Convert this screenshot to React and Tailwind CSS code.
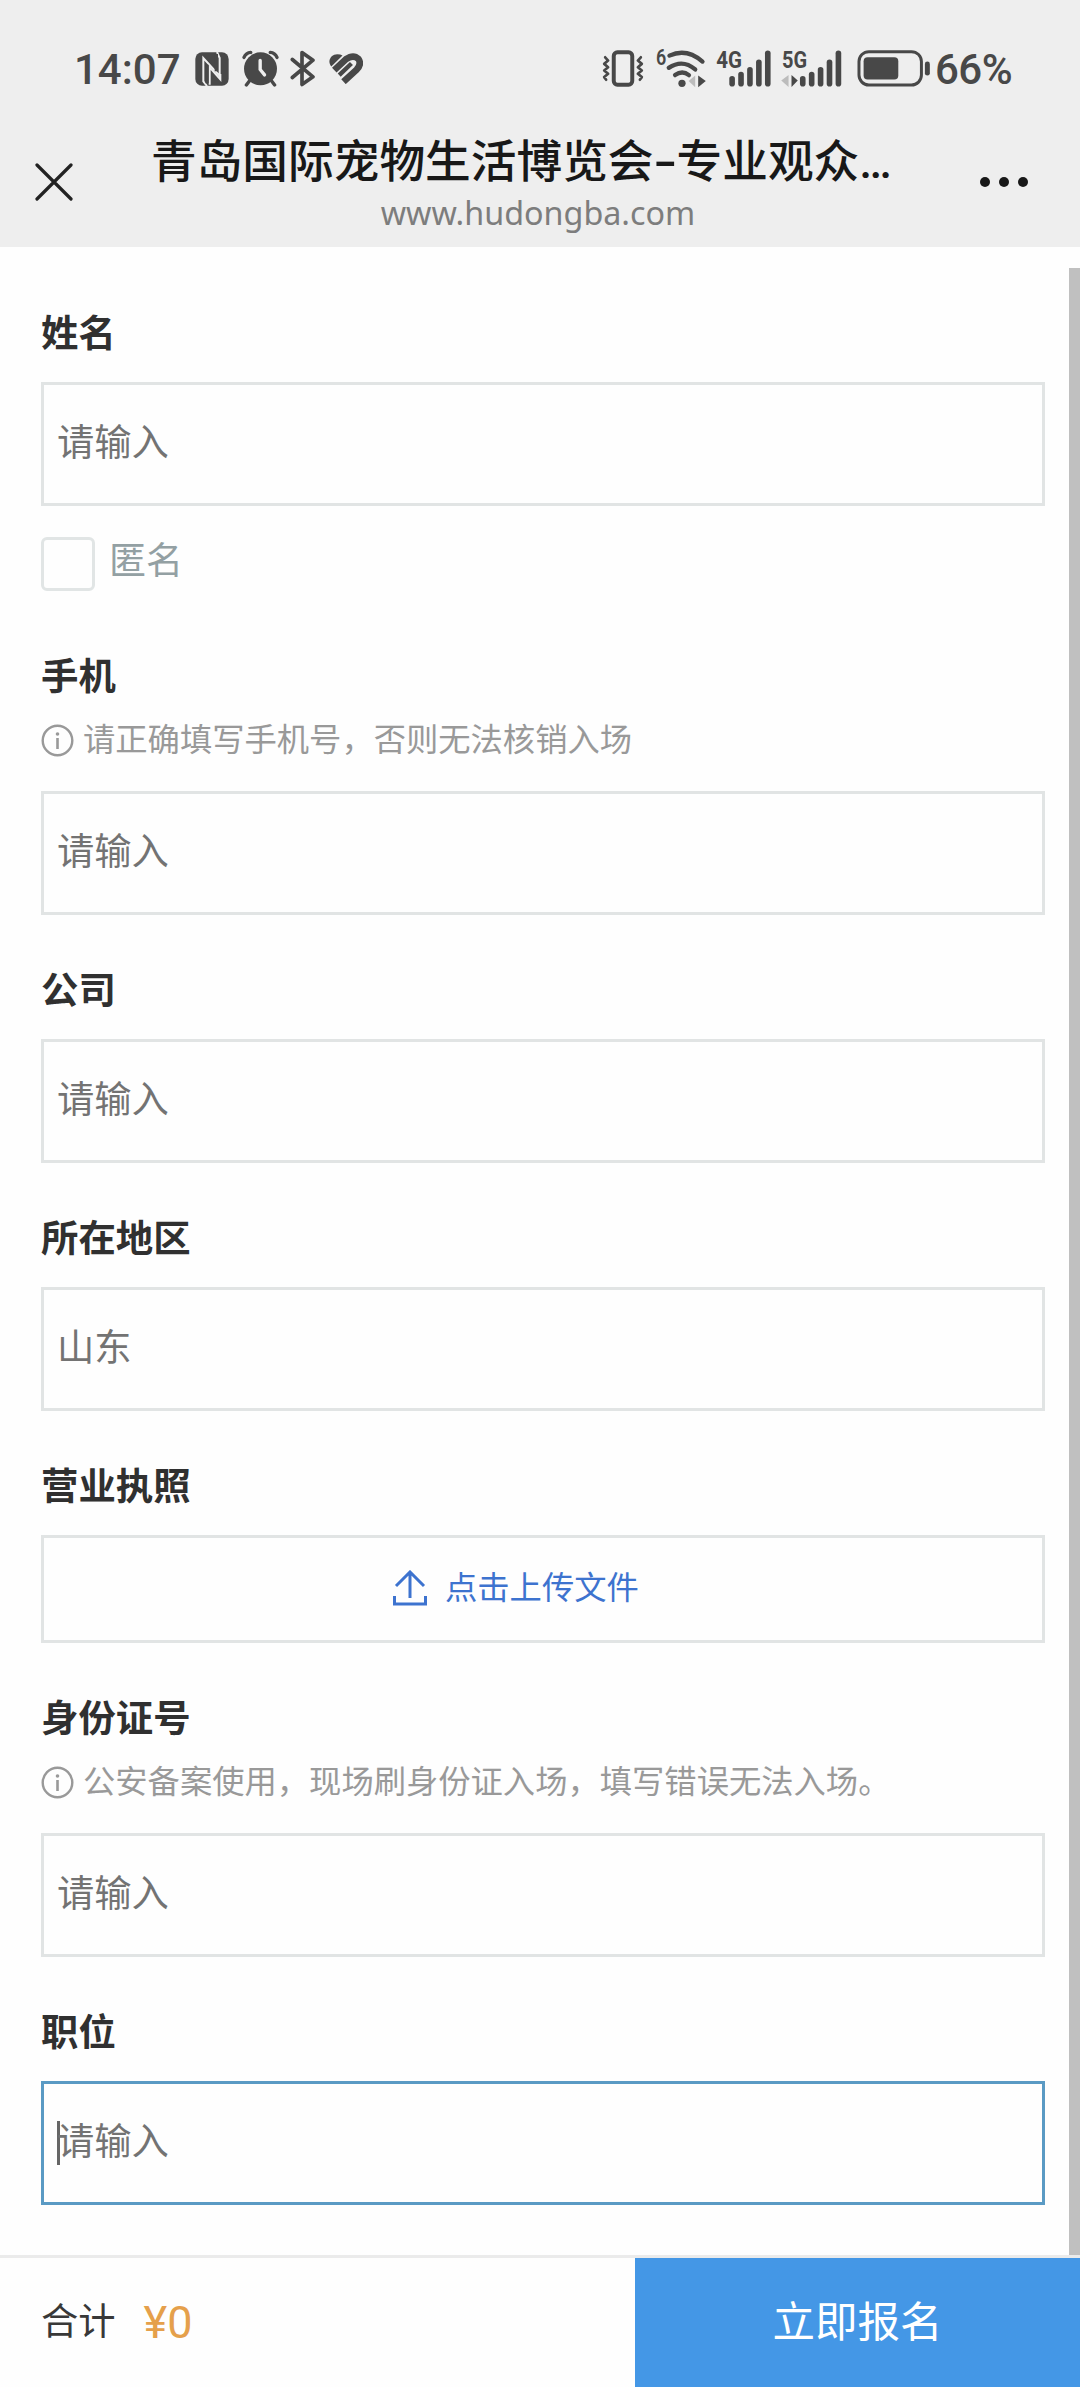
import React from "react";

const fields = [
  { label: "姓名", text: "请输入", anonymous: true },
  { label: "手机", hint: "请正确填写手机号，否则无法核销入场", text: "请输入" },
  { label: "公司", text: "请输入" },
  { label: "所在地区", text: "山东" },
  { label: "营业执照", upload: true },
  {
    label: "身份证号",
    hint: "公安备案使用，现场刷身份证入场，填写错误无法入场。",
    text: "请输入",
  },
  { label: "职位", text: "请输入", focused: true },
];

const NfcIcon = () => (
  <svg viewBox="0 0 102 102" className="w-[34px] h-[34px] ml-[14px]">
    <rect x="1" y="1" width="100" height="100" rx="20" fill="#484848" />
    <path d="M36 102 L25 88 V18 L74 72 V18 L66 0" fill="none" stroke="#eee" strokeWidth="6" />
    <path d="M44 98 V46 L76 82 V66" fill="none" stroke="#eee" strokeWidth="6" />
    <path d="M36 38 V94 M64 6 V58" stroke="#484848" strokeWidth="10" />
  </svg>
);

const AlarmIcon = () => (
  <svg viewBox="0 0 110 110" className="w-[37px] h-[37px] ml-[13px]">
    <g fill="none" stroke="#484848" strokeWidth="10" strokeLinecap="round">
      <path d="M6 22 Q12 8 26 7 M104 22 Q98 8 84 7" />
      <path d="M22 92 L13 104 M88 92 L97 104" />
    </g>
    <circle cx="55" cy="56" r="49" fill="#484848" />
    <path d="M54 31 V58 L67 74" fill="none" stroke="#eee" strokeWidth="10" strokeLinecap="round" />
  </svg>
);

const BluetoothIcon = () => (
  <svg viewBox="0 0 78 110" className="w-[26px] h-[37px] ml-[11px]">
    <path
      d="M7 28 L69 80 L36 103 V7 L69 30 L7 82"
      fill="none"
      stroke="#484848"
      strokeWidth="11"
      strokeLinecap="round"
      strokeLinejoin="round"
    />
  </svg>
);

const HealthIcon = () => (
  <svg viewBox="0 0 106 92" className="w-[35px] h-[31px] ml-[12px]">
    <path d="M10 40 C-4 22 10 3 28 3 Q38 3 44 7 Z" fill="#484848" />
    <g fill="none" stroke="#484848" strokeLinecap="butt">
      <path d="M19 51 L54 18 Q77 2 92 17 Q103 33 86 50 L47 86" strokeWidth="20" />
      <path d="M34 66 L71 31" strokeWidth="13" />
    </g>
  </svg>
);

const VibrateIcon = () => (
  <svg viewBox="0 0 126 112" className="w-[42px] h-[37px]">
    <g fill="none" stroke="#484848" strokeLinejoin="round" strokeLinecap="round">
      <rect x="35" y="7" width="56" height="98" rx="11" strokeWidth="12" />
      <path d="M9 22 L18 32 L6 42 L18 52 L6 62 L18 72 L6 82 L12 90" strokeWidth="8" />
      <path d="M117 22 L108 32 L120 42 L108 52 L120 62 L108 72 L120 82 L114 90" strokeWidth="8" />
    </g>
  </svg>
);

const WifiIcon = () => (
  <svg viewBox="0 0 150 118" className="w-[50px] h-[39px] ml-[12px] overflow-visible">
    <text x="-1" y="48" fontSize="67" fontWeight="600" fill="#484848" textLength="31" lengthAdjust="spacingAndGlyphs">6</text>
    <g fill="none" stroke="#484848" strokeWidth="13" strokeLinecap="round">
      <path d="M40 20 Q92 -4 140 38" />
      <path d="M38 57 Q80 29 118 62" />
      <path d="M57 79 Q79 63 99 79" />
    </g>
    <circle cx="78" cy="104" r="11" fill="#484848" />
    <path d="M118 80 V116 L98 97 Z" fill="#bcbcbc" />
    <path d="M127 80 V116 L150 97 Z" fill="#484848" />
  </svg>
);

const Bars = () => (
  <g stroke="#484848" strokeWidth="17" strokeLinecap="round">
    <path d="M8 87 V102" />
    <path d="M35 74 V102" />
    <path d="M62 60 V102" />
    <path d="M89 37 V102" />
    <path d="M116 10 V102" />
  </g>
);

const Signal4G = () => (
  <svg viewBox="0 0 168 112" className="w-[56px] h-[37px] ml-[10px] overflow-visible">
    <text x="0" y="55" fontSize="73" fontWeight="700" fill="#484848" textLength="78" lengthAdjust="spacingAndGlyphs">4G</text>
    <g transform="translate(40 0)">
      <Bars />
    </g>
  </svg>
);

const Signal5G = () => (
  <svg viewBox="0 0 186 112" className="w-[62px] h-[37px] ml-[9px] overflow-visible">
    <text x="2" y="55" fontSize="73" fontWeight="700" fill="#484848" textLength="76" lengthAdjust="spacingAndGlyphs">5G</text>
    <g transform="translate(57 0)">
      <Bars />
    </g>
    <path d="M22 76 V112 L0 92 Z" fill="#bcbcbc" />
    <path d="M31 76 V112 L50 92 Z" fill="#484848" />
  </svg>
);

const BatteryIcon = () => (
  <svg viewBox="0 0 222 112" className="w-[74px] h-[37px] ml-[14px]">
    <rect x="5" y="5" width="189" height="101" rx="30" fill="none" stroke="#484848" strokeWidth="9" />
    <rect x="19" y="22" width="105" height="67" rx="12" fill="#484848" />
    <path d="M212 42 V70" stroke="#484848" strokeWidth="15" strokeLinecap="round" />
  </svg>
);

const InfoIcon = () => (
  <svg viewBox="0 0 33 33" className="w-[33px] h-[33px]">
    <circle cx="16.5" cy="16.5" r="14.8" fill="none" stroke="#999" strokeWidth="2.4" />
    <circle cx="16.5" cy="10" r="1.8" fill="#999" />
    <path d="M16.5 14 V25" stroke="#999" strokeWidth="2.6" />
  </svg>
);

const UploadIcon = () => (
  <svg viewBox="0 0 34 36" className="w-[34px] h-[36px]">
    <path
      d="M17 28 V2 M3 16 L17 2 L31 16 M1.5 26 V34 H32.5 V26"
      fill="none"
      stroke="#3d73cf"
      strokeWidth="3"
    />
  </svg>
);

const Field = ({ field }) => (
  <section className={field.anonymous ? "mb-[61px]" : "mb-[51px]"}>
    <h2 className="h-12 pt-[1px] leading-[48px] text-[37.4px] font-bold text-[#303030]">
      {field.label}
    </h2>

    {field.hint && (
      <div className="mt-[15px] h-[50px] flex items-center gap-[9px] text-[32.3px] text-[#999]">
        <InfoIcon />
        <span className="whitespace-nowrap">{field.hint}</span>
      </div>
    )}

    {field.upload ? (
      <div className="mt-[25px] h-[108px] flex items-center pl-[349px] pb-[2px] gap-[18px] border-[3px] border-[#e1e4e4] text-[32.3px] text-[#3d73cf]">
        <UploadIcon />
        <span>点击上传文件</span>
      </div>
    ) : (
      <div
        className={`h-[124px] flex items-center pl-[13px] border-[3px] text-[37.3px] text-[#737373] ${field.hint ? "mt-[26px]" : "mt-[25px]"} ${field.focused ? "border-[#5a9ac4]" : "border-[#e1e4e4]"}`}
      >
        {field.focused && <span className="w-[3px] h-11 -mr-[3px] bg-[#666]"></span>}
        <span>{field.text}</span>
      </div>
    )}

    {field.anonymous && (
      <div className="mt-[31px] h-[54px] flex items-center gap-[14px]">
        <span className="w-[54px] h-[54px] border-[3px] border-[#e1e5e5] rounded-md"></span>
        <span className="pb-1 text-[37px] text-[#93a0a3]">匿名</span>
      </div>
    )}
  </section>
);

const App = () => {
  return (
    <div className="w-[1080px] h-[2387px] flex flex-col overflow-hidden bg-[#fefefe] font-['Roboto','Noto_Sans_CJK_SC',sans-serif]">
      <header className="h-[247px] shrink-0 bg-[#eee]">
        {/* Status bar */}
        <div className="h-[137px] pl-[74px] pr-[65px] flex items-center justify-between text-[#484848]">
          <div className="flex items-center">
            <span className="w-[107px] pt-[2px] whitespace-nowrap text-[42px] font-medium">14:07</span>
            <NfcIcon />
            <AlarmIcon />
            <BluetoothIcon />
            <HealthIcon />
          </div>
          <div className="flex items-center">
            <VibrateIcon />
            <WifiIcon />
            <Signal4G />
            <Signal5G />
            <BatteryIcon />
            <span className="w-[80px] ml-[4px] pt-[2px] whitespace-nowrap text-[42px] font-medium tracking-[-0.5px]">66%</span>
          </div>
        </div>

        {/* Title bar */}
        <div className="h-[110px] flex">
          <svg viewBox="0 0 38 38" className="w-[38px] h-[38px] ml-[35px] mt-[26px]">
            <path d="M2 2 L36 36 M36 2 L2 36" stroke="#222" strokeWidth="3.2" strokeLinecap="round" />
          </svg>
          <div className="ml-[78px] w-[776px] flex flex-col items-center">
            <h1 className="h-[54px] -mt-[1px] w-[742px] self-start leading-[54px] text-[45.7px] font-medium text-[#181818] whitespace-nowrap">
              青岛国际宠物生活博览会<span className="inline-block w-[23px] text-center scale-x-150">-</span>专业观众…
            </h1>
            <p className="-ml-[2px] leading-[44px] text-[32.3px] text-[#7d7d7d] font-['Noto_Sans',sans-serif]">
              www.hudongba.com
            </p>
          </div>
          <div className="ml-[53px] mt-[40px] flex gap-[9px]">
            <span className="w-[10px] h-[10px] rounded-full bg-[#181818]"></span>
            <span className="w-[10px] h-[10px] rounded-full bg-[#181818]"></span>
            <span className="w-[10px] h-[10px] rounded-full bg-[#181818]"></span>
          </div>
        </div>
      </header>

      <main className="h-[2008px] shrink-0 flex justify-between">
        <form className="w-[1004px] ml-[41px] pt-[62px]">
          {fields.map((field) => (
            <Field key={field.label} field={field} />
          ))}
        </form>
        <div className="w-[11px] mt-[21px] bg-[#c0c0c0]"></div>
      </main>

      <footer className="flex-1 flex border-t-[3px] border-[#ebebeb]">
        <div className="w-[635px] pl-[41px] flex items-center gap-[28px]">
          <span className="text-[37.3px] text-[#383838]">合计</span>
          <span className="text-[45px] text-[#e5a04b]">¥0</span>
        </div>
        <button className="flex-1 bg-[#4497e6] text-white text-[42.5px]">立即报名</button>
      </footer>
    </div>
  );
};

export default App;
